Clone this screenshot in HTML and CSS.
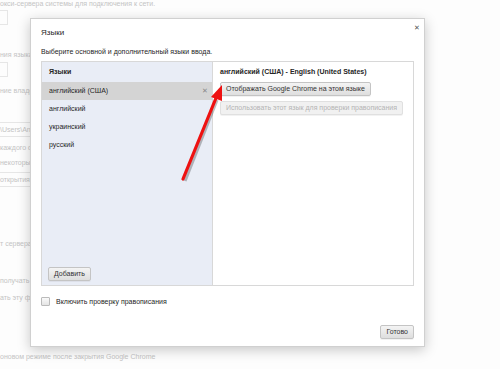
FILE: index.html
```html
<!DOCTYPE html>
<html lang="ru">
<head>
    <meta charset="UTF-8">
    <title>Языки</title>
    <link rel="stylesheet" href="styles.css">
</head>
<body>
    <div class="page">
        <p class="bg-line l1">окси-сервера системы для подключения к сети.</p>
        <div class="bg-box b1"></div>
        <p class="bg-line l2">ния языка</p>
        <div class="bg-box b2"></div>
        <p class="bg-line l3">ние владе</p>
        <div class="bg-box b3">\Users\An</div>
        <p class="bg-line l4">каждого ф</p>
        <p class="bg-line l5">некоторых</p>
        <div class="bg-box b4">открытия</div>
        <p class="bg-line l6">т сервера</p>
        <p class="bg-line l7">получать</p>
        <p class="bg-line l8">ать эту фу</p>
        <p class="bg-line l9">оновом режиме после закрытия Google Chrome</p>
    </div>

    <div class="dialog">
        <div class="dialog-head">
            <span class="dialog-title">Языки</span>
            <span class="close">&#x2715;</span>
        </div>
        <p class="hint">Выберите основной и дополнительный языки ввода.</p>

        <div class="panel">
            <div class="lang-list">
                <div class="list-head">Языки</div>
                <div class="lang-row selected">английский (США)<span class="remove">&#x2715;</span></div>
                <div class="lang-row">английский</div>
                <div class="lang-row">украинский</div>
                <div class="lang-row">русский</div>
                <div class="list-foot">
                    <button class="btn">Добавить</button>
                </div>
            </div>
            <div class="lang-info">
                <div class="info-head">английский (США) - English (United States)</div>
                <button class="btn">Отображать Google Chrome на этом языке</button>
                <button class="btn" disabled>Использовать этот язык для проверки правописания</button>
            </div>
        </div>

        <label class="spell">
            <span class="check"></span>
            Включить проверку правописания
        </label>

        <div class="dialog-foot">
            <button class="btn">Готово</button>
        </div>
    </div>

    <svg class="arrow" width="500" height="369" viewBox="0 0 500 369">
        <line x1="184" y1="180" x2="216" y2="99" stroke="rgba(0,0,0,0.25)" stroke-width="3.2" transform="translate(1,1)"/>
        <line x1="183" y1="179" x2="216" y2="98" stroke="#ee1111" stroke-width="3.2" stroke-linecap="round"/>
        <polygon points="222,85 222,101 211,97" fill="#ee1111"/>
    </svg>
</body>
</html>
```

FILE: styles.css
```css
body {
    margin: 0;
    width: 500px;
    height: 369px;
    overflow: hidden;
    background: #fdfdfd;
    font-family: "Liberation Sans", Arial, sans-serif;
    font-size: 7px;
    color: #262626;
    position: relative;
}

.page {
    color: #c4c4c4;
}

.bg-line {
    position: absolute;
    left: 0;
    margin: 0;
    white-space: nowrap;
}

.l1 { top: 0; }
.l2 { top: 51px; }
.l3 { top: 87px; }
.l4 { top: 144px; }
.l5 { top: 159px; }
.l6 { top: 240px; }
.l7 { top: 277px; }
.l8 { top: 294px; }
.l9 { top: 353px; }

.bg-box {
    position: absolute;
    left: 0;
    width: 40px;
    height: 13px;
    border: 1px solid #e6e6e6;
    border-left: none;
    line-height: 13px;
    white-space: nowrap;
}

.b1 { top: 10px; width: 7px; }
.b2 { top: 62px; width: 7px; }
.b3 { top: 122px; }
.b4 { top: 172px; }

.dialog {
    position: absolute;
    left: 30px;
    top: 18px;
    width: 395px;
    height: 329px;
    padding: 0 10px;
    background: #fff;
    border: 1px solid #d0d0d0;
    box-shadow: 0 3px 12px rgba(0, 0, 0, 0.22);
    display: flex;
    flex-direction: column;
    box-sizing: border-box;
}

.dialog-head {
    display: flex;
    justify-content: space-between;
    align-items: center;
    height: 24px;
    margin-top: 1px;
}

.dialog-title {
    font-size: 8px;
}

.close {
    font-size: 7px;
    color: #555;
    margin-right: -6px;
    margin-top: -8px;
}

.hint {
    margin: 0;
    height: 17px;
    line-height: 12px;
    padding-top: 2px;
    box-sizing: border-box;
}

.panel {
    display: flex;
    height: 225px;
    border: 1px solid #d8d8d8;
    box-sizing: border-box;
}

.lang-list {
    width: 170px;
    background: #e9edf6;
    border-right: 1px solid #d8d8d8;
    display: flex;
    flex-direction: column;
}

.list-head {
    height: 20px;
    line-height: 20px;
    padding-left: 7px;
    font-weight: bold;
}

.lang-row {
    height: 18px;
    line-height: 18px;
    padding-left: 7px;
    display: flex;
    justify-content: space-between;
}

.lang-row.selected {
    background: #d4d4d4;
}

.remove {
    font-size: 7px;
    color: #888;
    margin-right: 4px;
}

.list-foot {
    margin-top: auto;
    padding: 0 0 4px 6px;
}

.lang-info {
    flex: 1;
    padding: 0 7px;
    display: flex;
    flex-direction: column;
    align-items: flex-start;
}

.info-head {
    height: 20px;
    line-height: 20px;
    font-weight: bold;
}

.lang-info .btn + .btn {
    margin-top: 5px;
}

.btn {
    font-family: inherit;
    font-size: 7px;
    color: #333;
    height: 14px;
    line-height: 12px;
    padding: 0 5px;
    border: 1px solid #c4c4c4;
    border-radius: 2px;
    background: linear-gradient(#f4f4f4, #dedede);
    box-shadow: 0 1px 0 rgba(0, 0, 0, 0.05);
    white-space: nowrap;
}

.btn:disabled {
    color: #b4b4b4;
    border-color: #e0e0e0;
    background: #f1f1f1;
}

.spell {
    display: flex;
    align-items: center;
    gap: 6px;
    margin-top: 9px;
    height: 12px;
}

.check {
    width: 7px;
    height: 7px;
    border: 1px solid #bbb;
    border-radius: 1px;
    background: linear-gradient(#fafafa, #e4e4e4);
}

.dialog-foot {
    margin-top: auto;
    margin-bottom: 7px;
    display: flex;
    justify-content: flex-end;
}

.arrow {
    position: absolute;
    left: 0;
    top: 0;
}
```
